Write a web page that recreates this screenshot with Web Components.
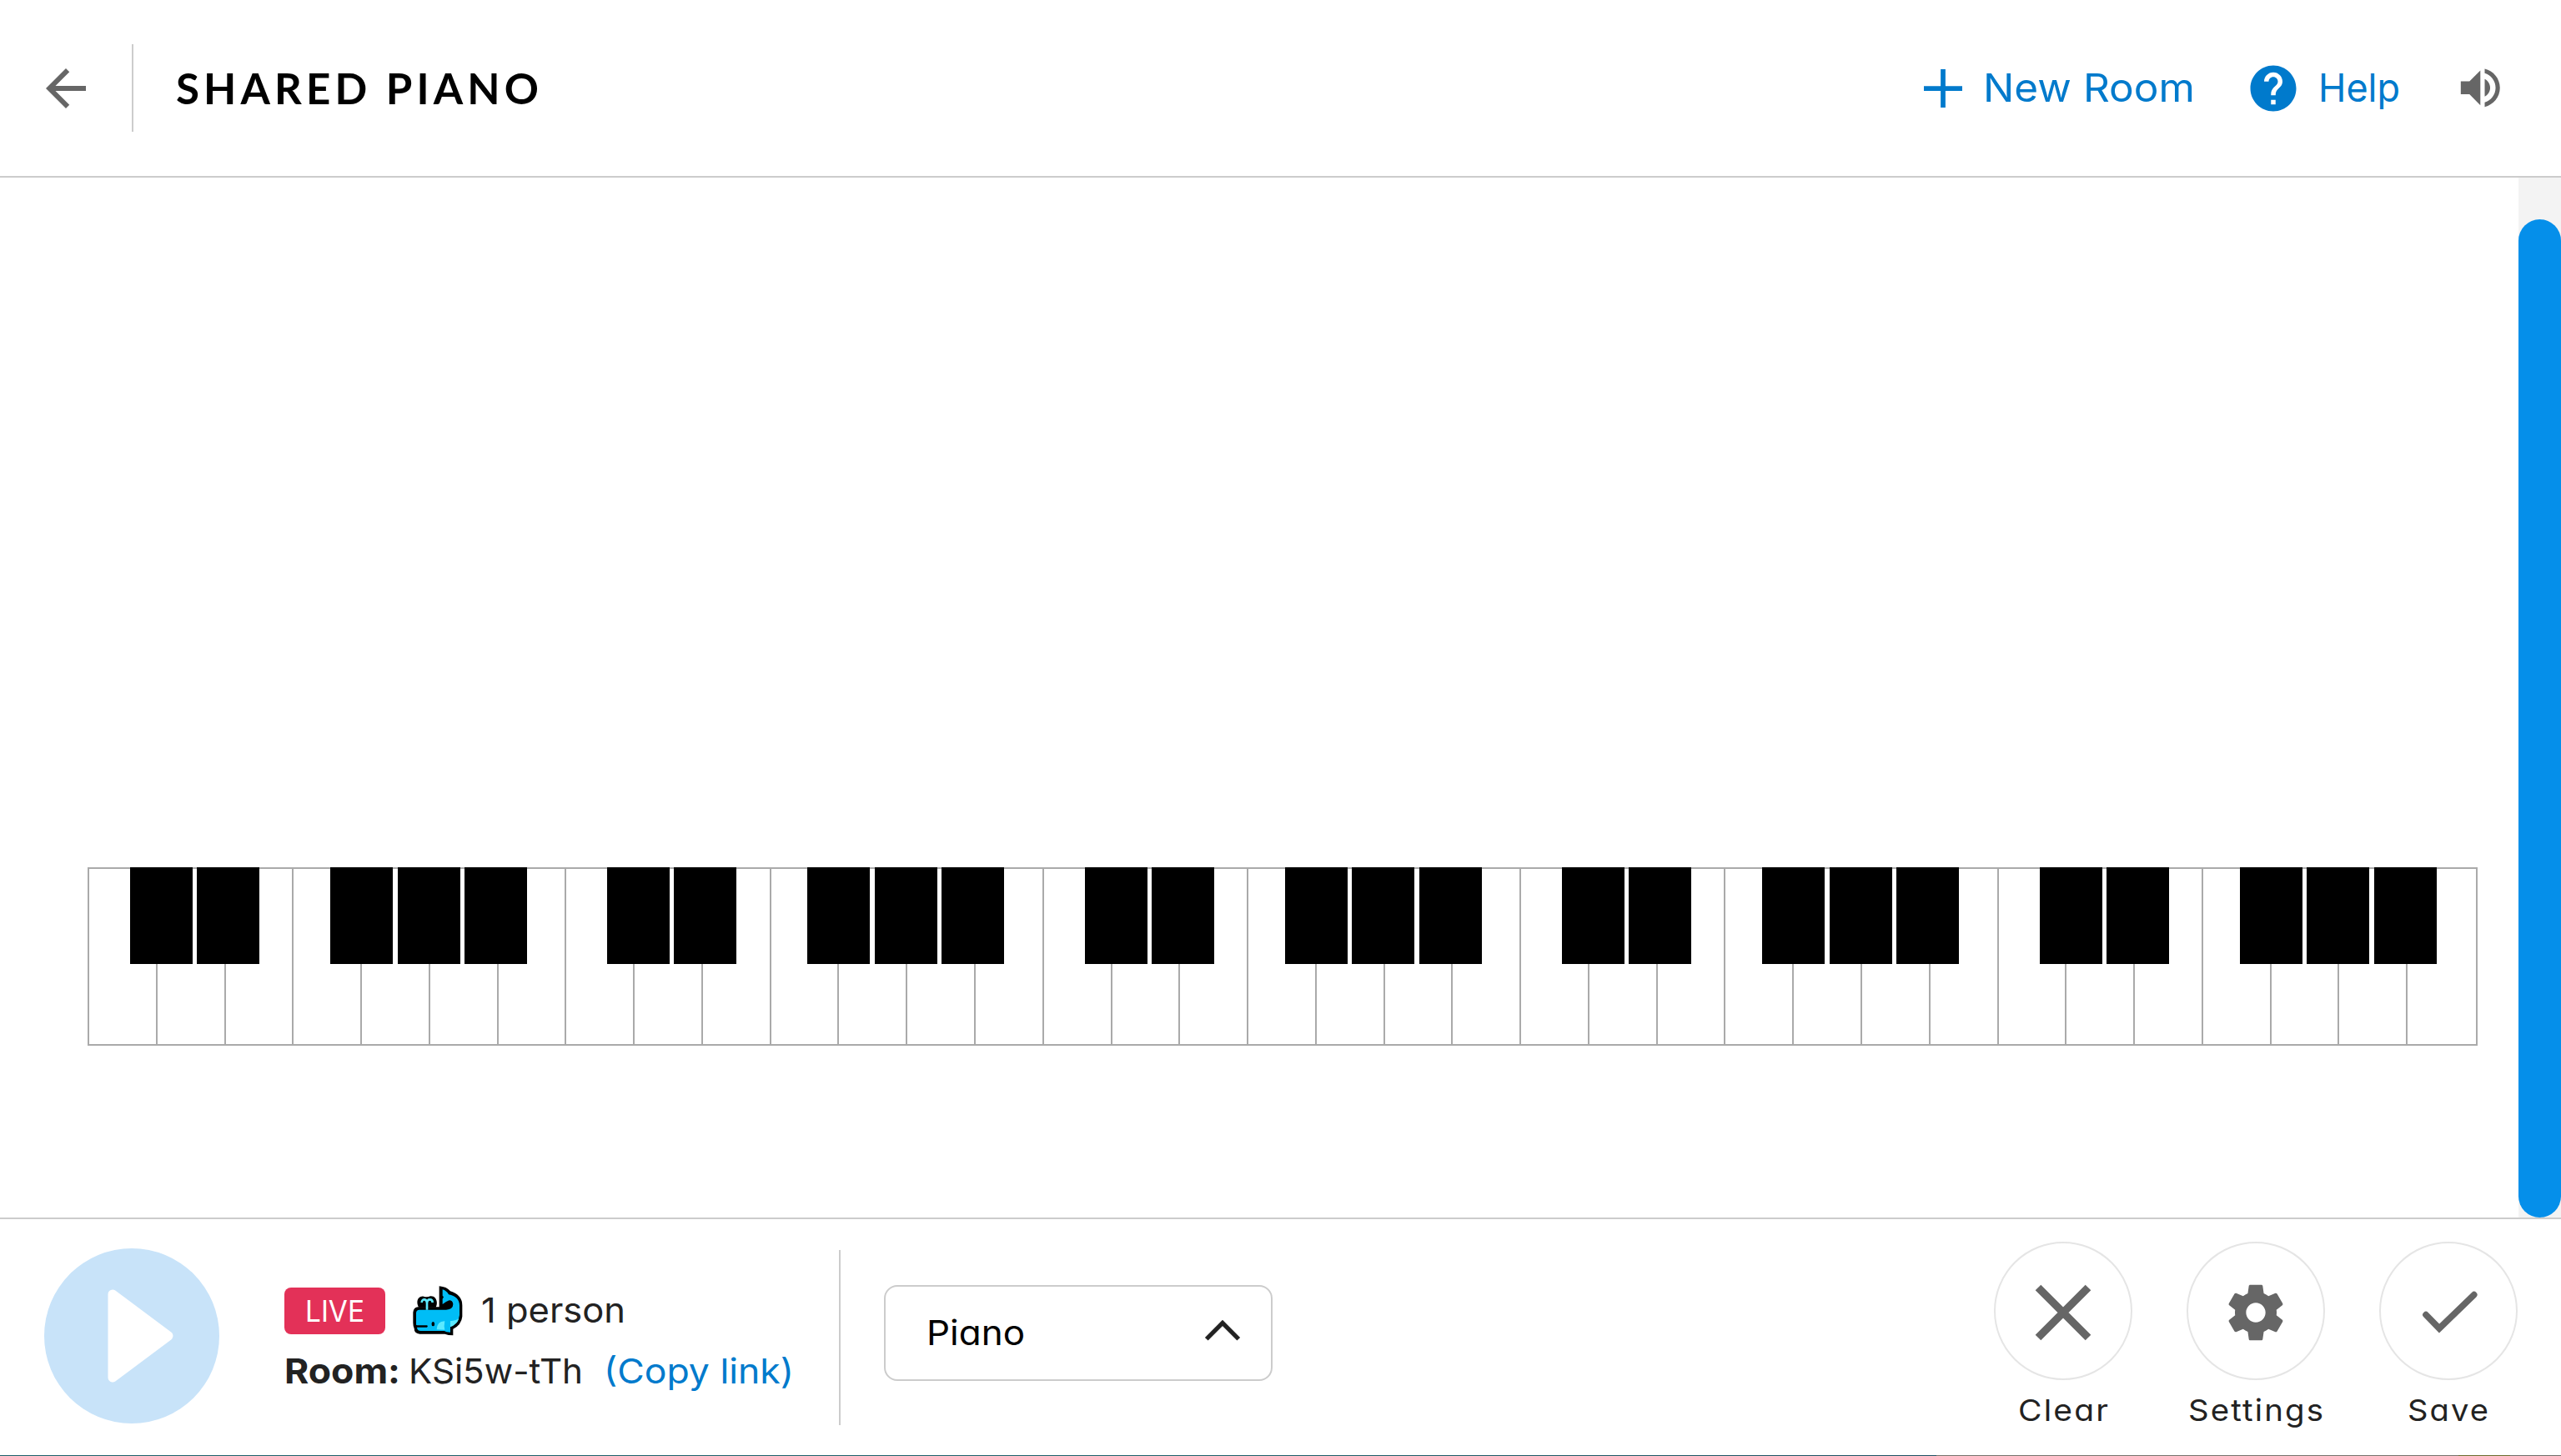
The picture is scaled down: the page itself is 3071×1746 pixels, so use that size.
<!DOCTYPE html>
<html lang="en">
<head>
<meta charset="utf-8">
<title>Shared Piano</title>
<style>
  html, body {
    margin: 0;
    height: 100%;
    overflow: hidden;
    background: #fff;
  }
  body {
    font-family: Inter, "Open Sans", sans-serif;
    font-feature-settings: "cv11";
    color: #222;
  }
</style>
</head>
<body>
<piano-app></piano-app>

<script>
  // Text stretched to the given width. With a tracking attribute that much
  // letter spacing goes in first; tracking="auto" uses letter spacing only.
  class FitText extends HTMLElement {
    constructor() {
      super();
      this.attachShadow({ mode: 'open' });
      this.shadowRoot.innerHTML = `
        <style>
          :host { display: block; flex: none; line-height: 1; white-space: nowrap; }
          span { display: inline-block; white-space: pre; transform-origin: 0 50%; }
        </style>
        <span><slot></slot></span>
      `;
    }

    connectedCallback() {
      const target = Number(this.getAttribute('width'));
      const tracking = this.getAttribute('tracking') || '0';
      const span = this.shadowRoot.querySelector('span');
      const natural = span.getBoundingClientRect().width;
      const gaps = this.textContent.length - 1;
      this.style.width = `${target}px`;
      if (tracking === 'auto') {
        span.style.letterSpacing = `${(target - natural) / gaps}px`;
        return;
      }
      span.style.letterSpacing = `${tracking}px`;
      span.style.transform = `scaleX(${target / (natural + gaps * Number(tracking))})`;
    }
  }

  const ICONS = {
    back: '<path d="M20 11H7.83l5.59-5.59L12 4l-8 8 8 8 1.41-1.41L7.83 13H20v-2z"/>',
    plus: '<path d="M10.5 0h3v10.500H24v3H13.500v10.500h-3v-10.500H0v-3h10.500z"/>',
    help: '<path d="M12 2C6.480 2 2 6.480 2 12s4.480 10 10 10 10-4.480 10-10S17.520 2 12 2zm1 17h-2v-2h2v2zm2.070-7.750l-.9.920C13.450 12.900 13 13.500 13 15h-2v-.5c0-1.100.45-2.100 1.170-2.830l1.240-1.260c.37-.36.59-.86.59-1.410 0-1.100-.9-2-2-2s-2 .9-2 2H8c0-2.210 1.790-4 4-4s4 1.790 4 4c0 .88-.36 1.680-.93 2.250z"/>',
    volume: '<path d="M3 9v6h4l5 5V4L7 9H3zm13.500 3c0-1.770-1.020-3.290-2.500-4.030v8.050c1.480-.73 2.500-2.250 2.500-4.020zM14 3.230v2.060c2.890.86 5 3.540 5 6.710s-2.110 5.850-5 6.710v2.060c4.010-.91 7-4.490 7-8.770s-2.990-7.860-7-8.770z"/>',
    settings: '<path d="M19.430 12.980c.04-.32.07-.64.07-.98s-.03-.66-.07-.98l2.110-1.650c.19-.15.24-.42.12-.64l-2-3.460c-.12-.22-.39-.3-.61-.22l-2.490 1c-.52-.4-1.080-.73-1.690-.98l-.38-2.650C14.460 2.180 14.250 2 14 2h-4c-.25 0-.46.18-.49.42l-.38 2.650c-.61.25-1.170.59-1.690.98l-2.490-1c-.23-.09-.49 0-.61.22l-2 3.460c-.13.22-.07.49.12.64l2.110 1.650c-.04.32-.07.65-.07.98s.03.66.07.98l-2.110 1.650c-.19.15-.24.42-.12.64l2 3.460c.12.22.39.3.61.22l2.490-1c.52.4 1.080.73 1.690.98l.38 2.650c.03.24.24.42.49.42h4c.25 0 .46-.18.49-.42l.38-2.650c.61-.25 1.170-.59 1.690-.98l2.490 1c.23.09.49 0 .61-.22l2-3.460c.12-.22.07-.49-.12-.64l-2.110-1.650zM12 15.500c-1.930 0-3.500-1.570-3.500-3.500s1.570-3.500 3.500-3.500 3.500 1.570 3.500 3.500-1.570 3.500-3.500 3.500z"/>',
    clear: '<path d="M3 3L21 21M21 3L3 21" fill="none" stroke="currentColor" stroke-width="2.800"/>',
    save: '<path d="M3.900 12.800L8.700 17.700L21.200 5.600" fill="none" stroke="currentColor" stroke-width="2.300" stroke-linecap="round"/>',
    chevron: '<path d="M1 13L12 2L23 13" fill="none" stroke="currentColor" stroke-width="3"/>'
  };

  class UiIcon extends HTMLElement {
    constructor() {
      super();
      this.attachShadow({ mode: 'open' });
    }

    connectedCallback() {
      const size = this.getAttribute('size');
      this.shadowRoot.innerHTML = `
        <style>
          :host { display: block; flex: none; width: ${size}px; height: ${size}px; }
          svg { display: block; width: 100%; height: 100%; overflow: visible; fill: currentColor; }
        </style>
        <svg viewBox="0 0 24 24">${ICONS[this.getAttribute('name')]}</svg>
      `;
    }
  }

  class AppHeader extends HTMLElement {
    constructor() {
      super();
      this.attachShadow({ mode: 'open' });
      this.shadowRoot.innerHTML = `
        <style>
          :host {
            display: flex;
            align-items: center;
            box-sizing: border-box;
            height: 213px;
            padding: 0 65px 0 43px;
            border-bottom: 2px solid #ccc;
            color: #666;
          }
          .divider { width: 2px; height: 105px; margin: 0 51px 0 43px; background: #ccc; }
          .title { font: 700 51px Lato, sans-serif; color: #000; }
          nav { display: flex; align-items: center; margin-left: auto; }
          .link { display: flex; align-items: center; font-size: 46.500px; color: #007acc; }
          .new { gap: 25px; margin-right: 61px; }
          .help { gap: 21px; margin-right: 65px; }
        </style>
        <ui-icon name="back" size="72"></ui-icon>
        <div class="divider"></div>
        <fit-text class="title" width="435" tracking="auto">SHARED PIANO</fit-text>
        <nav>
          <div class="link new">
            <ui-icon name="plus" size="46"></ui-icon>
            <fit-text width="254">New Room</fit-text>
          </div>
          <div class="link help">
            <ui-icon name="help" size="66"></ui-icon>
            <fit-text width="98">Help</fit-text>
          </div>
          <ui-icon name="volume" size="62.600"></ui-icon>
        </nav>
      `;
    }
  }

  // One octave: seven white keys with the five black ones over them
  class PianoOctave extends HTMLElement {
    constructor() {
      super();
      this.attachShadow({ mode: 'open' });
      const black = [51, 131, 291, 371.5, 452];
      this.shadowRoot.innerHTML = `
        <style>
          :host { display: grid; grid-template-columns: repeat(7, 1fr); position: relative; width: 572.400px; height: 214px; }
          .white { box-sizing: border-box; border: 2px solid #aaa; border-right: 0; }
          .black { position: absolute; top: 0; width: 75px; height: 116px; background: #000; }
          :host([last]) { width: 576.400px; grid-template-columns: repeat(6, 81.770px) 1fr; }
          :host([last]) .white:nth-of-type(7) { border-right: 2px solid #aaa; }
        </style>
        ${'<div class="white"></div>'.repeat(7)}
        ${black.map((x) => `<i class="black" style="left: ${x}px"></i>`).join('')}
      `;
    }
  }

  class PianoStage extends HTMLElement {
    constructor() {
      super();
      this.attachShadow({ mode: 'open' });
      this.shadowRoot.innerHTML = `
        <style>
          :host { display: flex; flex: 1; min-height: 0; }
          .keys { display: flex; flex: 1; align-items: flex-end; padding: 0 0 206px 105px; }
          .scroll { display: flex; width: 51px; padding-top: 50px; background: #f3f3f3; }
          .thumb { flex: 1; border-radius: 26px; background: #058fea; }
        </style>
        <div class="keys">
          <piano-octave></piano-octave>
          <piano-octave></piano-octave>
          <piano-octave></piano-octave>
          <piano-octave></piano-octave>
          <piano-octave last></piano-octave>
        </div>
        <div class="scroll"><div class="thumb"></div></div>
      `;
    }
  }

  class PlayButton extends HTMLElement {
    constructor() {
      super();
      this.attachShadow({ mode: 'open' });
      this.shadowRoot.innerHTML = `
        <style>
          :host { display: block; flex: none; width: 210px; height: 210px; border-radius: 50%; background: #c8e3f9; }
          svg { display: block; }
        </style>
        <svg width="210" height="210" viewBox="0 0 210 210">
          <path d="M82 55L149 105L82 155Z" fill="#fff" stroke="#fff" stroke-width="11" stroke-linejoin="round"/>
        </svg>
      `;
    }
  }

  class RoomInfo extends HTMLElement {
    constructor() {
      super();
      this.attachShadow({ mode: 'open' });
      this.shadowRoot.innerHTML = `
        <style>
          :host { display: block; font-size: 41.500px; }
          .row { display: flex; align-items: center; height: 60px; }
          .row + .row { margin-top: 13px; }
          .badge {
            display: flex;
            align-items: center;
            justify-content: center;
            width: 121px;
            height: 56px;
            border-radius: 8px;
            background: #e33158;
            color: #fff;
            font-size: 36px;
          }
          svg { margin: 0 22px 0 33px; }
          .room { font-weight: 700; margin-right: 10px; }
          .link { margin-left: 25px; color: #007acc; }
        </style>
        <div class="row">
          <div class="badge"><fit-text width="71">LIVE</fit-text></div>
          <svg width="60" height="60" viewBox="45 35 180 180">
            <path d="M66 112C54 90 66 70 84 73Q96 77 108 72C126 70 138 90 128 112Z"/>
            <path d="M46 130Q48 112 64 111H140V36Q167 38 180 54Q223 68 223 105V145Q220 175 190 190V213Q172 213 160 208H70Q50 206 50 188Q46 180 46 168Z"/>
            <path fill="#00bdf6" d="M57 132Q58 121 69 121H165Q190 119 190 100Q188 87 176 87Q166 90 152 101V82L156 75L152 70V48Q166 52 174 66Q212 74 213 105V140Q210 170 180 182V202Q165 202 158 197H74Q61 197 60 184L57 174Z"/>
            <path fill="#5be9ff" d="M131 192Q133 161 160 162L158 180L160 193ZM180 161Q195 163 211 153Q204 174 180 183Z"/>
            <path d="M52 174Q56 177 62 177H96Q101 180 96 184H56Z"/>
            <ellipse cx="118" cy="172" rx="5.500" ry="8"/>
            <path d="M96 121V94M77 95Q78 83 88 84Q96 86 96 97Q97 84 106 84Q116 84 116 95" fill="none" stroke="#5be9ff" stroke-width="8"/>
          </svg>
          <fit-text width="173">1 person</fit-text>
        </div>
        <div class="row">
          <fit-text class="room" width="139">Room:</fit-text>
          <fit-text width="209">KSi5w-tTh</fit-text>
          <fit-text class="link" width="228">(Copy link)</fit-text>
        </div>
      `;
    }
  }

  class InstrumentSelect extends HTMLElement {
    constructor() {
      super();
      this.attachShadow({ mode: 'open' });
      this.shadowRoot.innerHTML = `
        <style>
          :host {
            display: flex;
            align-items: center;
            justify-content: space-between;
            flex: none;
            box-sizing: border-box;
            width: 466px;
            height: 115px;
            padding: 0 37px 0 49px;
            border: 2px solid #ccc;
            border-radius: 16px;
            color: #000;
            font-size: 41.500px;
          }
          ui-icon { color: #222; margin-top: 11px; }
        </style>
        <slot></slot>
        <ui-icon name="chevron" size="42"></ui-icon>
      `;
    }
  }

  class ToolButton extends HTMLElement {
    constructor() {
      super();
      this.attachShadow({ mode: 'open' });
    }

    connectedCallback() {
      this.shadowRoot.innerHTML = `
        <style>
          :host { display: flex; flex-direction: column; align-items: center; width: 231px; font-size: 36px; }
          .circle {
            display: flex;
            align-items: center;
            justify-content: center;
            box-sizing: border-box;
            width: 166px;
            height: 166px;
            padding-top: 4px;
            border: 2px solid #e5e5e5;
            border-radius: 50%;
            margin-bottom: 18px;
            color: #666;
          }
        </style>
        <div class="circle"><ui-icon name="${this.getAttribute('icon')}" size="80"></ui-icon></div>
        <slot></slot>
      `;
    }
  }

  class AppFooter extends HTMLElement {
    constructor() {
      super();
      this.attachShadow({ mode: 'open' });
      this.shadowRoot.innerHTML = `
        <style>
          :host { display: block; box-sizing: border-box; height: 286px; border-top: 2px solid #ccc; }
          .bar { display: flex; align-items: flex-start; height: 283px; padding: 0 20px 0 53px; }
          play-button { margin-top: 35px; }
          room-info { width: 665px; margin: 80px 0 0 78px; }
          .divider { width: 2px; height: 210px; margin-top: 37px; background: #ccc; }
          instrument-select { margin: 79px 0 0 52px; }
          .tools { display: flex; margin: 27px 0 0 auto; }
          .edge { height: 1px; background: linear-gradient(90deg, #1e6069 0 45%, #1f5062 75.600%, #76706a 75.600% 96%, #6b6a2c 96% 98%, #706d68 98%); }
        </style>
        <div class="bar">
          <play-button></play-button>
          <room-info></room-info>
          <div class="divider"></div>
          <instrument-select><fit-text width="118">Piano</fit-text></instrument-select>
          <div class="tools">
            <tool-button icon="clear"><fit-text width="108" tracking="2">Clear</fit-text></tool-button>
            <tool-button icon="settings"><fit-text width="162" tracking="2">Settings</fit-text></tool-button>
            <tool-button icon="save"><fit-text width="97" tracking="2">Save</fit-text></tool-button>
          </div>
        </div>
        <div class="edge"></div>
      `;
    }
  }

  class PianoApp extends HTMLElement {
    constructor() {
      super();
      this.attachShadow({ mode: 'open' });
      this.shadowRoot.innerHTML = `
        <style>
          :host { display: flex; flex-direction: column; height: 100%; }
          app-header, app-footer { flex: none; }
        </style>
        <app-header></app-header>
        <piano-stage></piano-stage>
        <app-footer></app-footer>
      `;
    }
  }

  customElements.define('ui-icon', UiIcon);
  customElements.define('play-button', PlayButton);
  customElements.define('piano-octave', PianoOctave);
  customElements.define('piano-stage', PianoStage);
  customElements.define('instrument-select', InstrumentSelect);
  customElements.define('tool-button', ToolButton);
  customElements.define('room-info', RoomInfo);
  customElements.define('app-header', AppHeader);
  customElements.define('app-footer', AppFooter);
  customElements.define('piano-app', PianoApp);
  customElements.define('fit-text', FitText);
</script>
</body>
</html>
